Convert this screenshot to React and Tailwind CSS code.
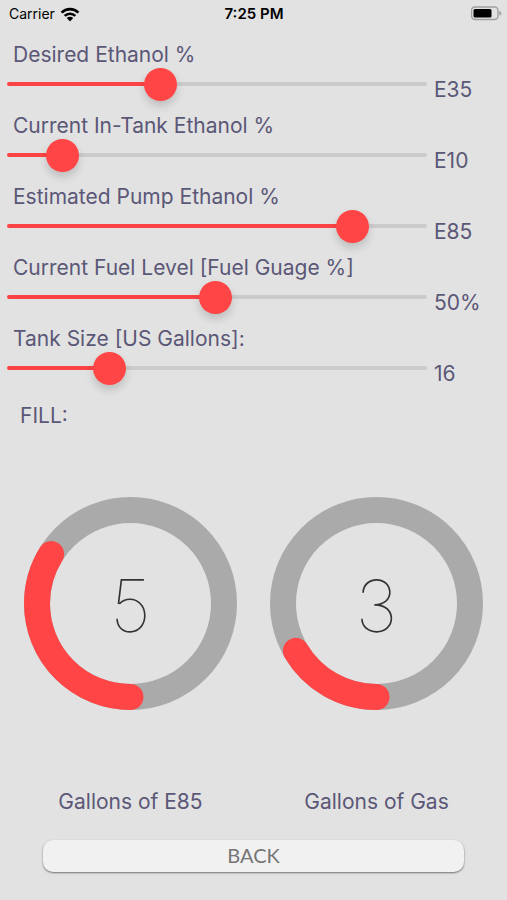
import { useState } from 'react'

const fields = [
  { id: 'desired', label: 'Desired Ethanol %', max: 100, format: (v) => `E${v}` },
  { id: 'current', label: 'Current In-Tank Ethanol %', max: 100, format: (v) => `E${v}` },
  { id: 'pump', label: 'Estimated Pump Ethanol %', max: 100, format: (v) => `E${v}` },
  { id: 'level', label: 'Current Fuel Level [Fuel Guage %]', max: 100, format: (v) => `${v}%` },
  { id: 'tank', label: 'Tank Size [US Gallons]:', max: 72, format: (v) => `${v}` },
]

// Regular pump gas is assumed to be E10
const GAS_ETHANOL = 10

function getFill({ desired, current, pump, level, tank }) {
  const inTank = (tank * level) / 100
  const total = tank - inTank
  const needed = desired * tank - current * inTank - GAS_ETHANOL * total
  const ethanol = pump > GAS_ETHANOL ? needed / (pump - GAS_ETHANOL) : 0
  const clamped = Math.min(Math.max(ethanol, 0), total)
  return { ethanol: clamped, gas: total - clamped }
}

function StatusBar() {
  return (
    <header className="grid h-7 grid-cols-3 items-center pl-[9px] pr-1 text-black">
      <div className="flex items-center gap-[5px] text-sm">
        <span>Carrier</span>
        <svg viewBox="0 0 20 15" className="h-[15px] w-5" aria-hidden="true">
          <g fill="none" stroke="currentColor" strokeWidth="2.6">
            <path d="M1.6 5.6a12 12 0 0 1 16.8 0" />
            <path d="M4.7 8.9a7.6 7.6 0 0 1 10.6 0" />
          </g>
          <path d="M10 14.4 6.8 11.1a4.6 4.6 0 0 1 6.4 0z" fill="currentColor" />
        </svg>
      </div>
      <div className="pr-1 text-center text-[15px] font-semibold">7:25 PM</div>
      <svg viewBox="0 0 32 16" className="h-4 w-8 justify-self-end" aria-hidden="true">
        <rect x="0.5" y="1" width="26.5" height="12.5" rx="3.5" fill="none" stroke="#a0a0a0" strokeWidth="1.4" />
        <rect x="2.5" y="3" width="18" height="8.5" rx="1.5" fill="#000" />
        <path d="M28.3 5c1.6.4 2 1.2 2 2.3s-.4 1.9-2 2.3z" fill="#a0a0a0" />
      </svg>
    </header>
  )
}

function SliderField({ field, value, onChange }) {
  const ratio = value / field.max
  // keeps the coloured part ending under the centre of the 33px thumb
  const stop = `calc(${ratio * 100}% + ${(0.5 - ratio) * 33}px)`

  return (
    <div className="h-[71px]">
      <label htmlFor={field.id} className="block pl-[13px] leading-7">
        {field.label}
      </label>
      <div className="flex items-start pl-[7px]">
        <input
          id={field.id}
          type="range"
          min="0"
          max={field.max}
          step="0.1"
          value={value}
          onChange={(e) => onChange(Number(e.target.value))}
          className="mt-[13px] h-1 min-w-0 flex-1 appearance-none rounded-full [&::-webkit-slider-thumb]:size-[33px] [&::-webkit-slider-thumb]:appearance-none [&::-webkit-slider-thumb]:rounded-full [&::-webkit-slider-thumb]:bg-[#ff4545] [&::-webkit-slider-thumb]:shadow-[0_5px_8px_rgba(0,0,0,0.16)]"
          style={{ background: `linear-gradient(to right, #fb4343 ${stop}, #cbcbcb ${stop})` }}
        />
        <output htmlFor={field.id} className="mt-[7px] w-20 pl-[7px] leading-7">
          {field.format(Math.round(value))}
        </output>
      </div>
    </div>
  )
}

function Ring({ amount, tank, caption }) {
  const share = tank > 0 ? (amount / tank) * 100 : 0

  return (
    <figure className="flex flex-col items-center">
      <svg viewBox="0 0 213 213" className="w-full overflow-visible" role="img" aria-label={caption}>
        <circle cx="106.5" cy="106.5" r="93.5" fill="none" stroke="#aaa" strokeWidth="26" />
        <circle
          cx="106.5"
          cy="106.5"
          r="93.5"
          fill="none"
          stroke="#ff4545"
          strokeWidth="26"
          strokeLinecap="round"
          pathLength="100"
          strokeDasharray={`${share} 100`}
          transform="rotate(90 106.5 106.5)"
        />
        <text x="106.5" y="135" textAnchor="middle" className="fill-[#333] text-[72px] font-thin">
          {Math.round(amount)}
        </text>
      </svg>
      <figcaption className="mt-[78px] leading-7">{caption}</figcaption>
    </figure>
  )
}

export default function App() {
  const [values, setValues] = useState({ desired: 35.4, current: 10, pump: 85, level: 49.6, tank: 16 })
  const fill = getFill(values)

  return (
    <div className="min-h-screen bg-[#e2e2e2] pb-7 font-['Inter',sans-serif] text-[21px] text-[#5b5777]">
      <StatusBar />
      <main className="pt-[13px]">
        {fields.map((f) => (
          <SliderField
            key={f.id}
            field={f}
            value={values[f.id]}
            onChange={(v) => setValues({ ...values, [f.id]: v })}
          />
        ))}
        <h2 className="mt-[6px] pl-5 leading-7">FILL:</h2>
        <section className="mt-[67px] grid grid-cols-2 gap-[33px] px-6">
          <Ring amount={fill.ethanol} tank={values.tank} caption={`Gallons of E${Math.round(values.pump)}`} />
          <Ring amount={fill.gas} tank={values.tank} caption="Gallons of Gas" />
        </section>
        <div className="mt-6 px-[43px]">
          <button
            type="button"
            className="block h-8 w-full rounded-[10px] bg-[#f1f1f1] pb-[2px] font-['Lato',sans-serif] text-xl leading-[30px] text-[#757575] shadow-[0_1px_2px_rgba(0,0,0,0.5)]"
          >
            BACK
          </button>
        </div>
      </main>
    </div>
  )
}
